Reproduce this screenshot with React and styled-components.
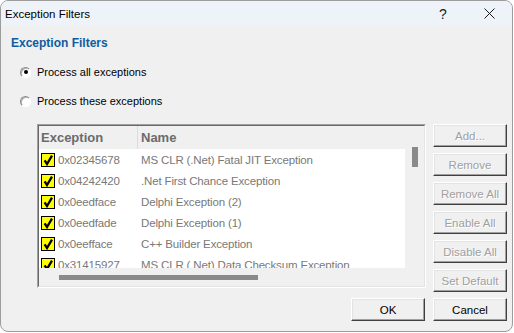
import React from 'react';
import styled, { createGlobalStyle } from 'styled-components';

const GlobalStyle = createGlobalStyle`
  html, body {
    margin: 0;
    padding: 0;
    background: #ffffff;
  }
  body {
    font-family: "Liberation Sans", Arial, sans-serif;
  }
  * {
    box-sizing: border-box;
  }
`;

const exceptions = [
  { code: '0x02345678', name: 'MS CLR (.Net) Fatal JIT Exception' },
  { code: '0x04242420', name: '.Net First Chance Exception' },
  { code: '0x0eedface', name: 'Delphi Exception (2)' },
  { code: '0x0eedfade', name: 'Delphi Exception (1)' },
  { code: '0x0eefface', name: 'C++ Builder Exception' },
  { code: '0x31415927', name: 'MS CLR (.Net) Data Checksum Exception' },
];

const sideButtons = ['Add...', 'Remove', 'Remove All', 'Enable All', 'Disable All', 'Set Default'];

const App = () => {
  return (
    <>
      <GlobalStyle />
      <Window>
        <TitleBar>
          <TitleText>Exception Filters</TitleText>
          <CaptionButton>?</CaptionButton>
          <CaptionButton>
            <svg width="11" height="11" viewBox="0 0 11 11">
              <path d="M0.5 0.5 L10.5 10.5 M10.5 0.5 L0.5 10.5" stroke="#1a1a1a" strokeWidth="1" fill="none" />
            </svg>
          </CaptionButton>
        </TitleBar>
        <Content>
          <Heading>Exception Filters</Heading>
          <RadioRow $top={14}>
            <Radio $checked />
            <RadioLabel>Process all exceptions</RadioLabel>
          </RadioRow>
          <RadioRow $top={13}>
            <Radio />
            <RadioLabel>Process these exceptions</RadioLabel>
          </RadioRow>
          <MainRow>
            <LeftColumn>
              <ListFrame>
                <ListInner>
                  <ListBody>
                    <HeaderRow>
                      <HeaderCell>Exception</HeaderCell>
                      <HeaderCell $divider>Name</HeaderCell>
                    </HeaderRow>
                    {exceptions.map((ex) => (
                      <Row key={ex.code}>
                        <CodeCell>
                          <CheckBox>
                            <svg width="12" height="12" viewBox="0 0 12 12">
                              <path d="M2.6 6.4 L5 10 L10 1.6" stroke="#000" strokeWidth="2.3" fill="none" />
                            </svg>
                          </CheckBox>
                          <CellText>{ex.code}</CellText>
                        </CodeCell>
                        <NameCell>{ex.name}</NameCell>
                      </Row>
                    ))}
                  </ListBody>
                  <VScroll>
                    <VThumb />
                  </VScroll>
                  <HScroll>
                    <HThumb />
                  </HScroll>
                </ListInner>
              </ListFrame>
              <OkRow>
                <DialogButton>OK</DialogButton>
              </OkRow>
            </LeftColumn>
            <ButtonColumn>
              {sideButtons.map((label) => (
                <DialogButton key={label} disabled $disabled>
                  {label}
                </DialogButton>
              ))}
              <DialogButton>Cancel</DialogButton>
            </ButtonColumn>
          </MainRow>
        </Content>
      </Window>
    </>
  );
};

const Window = styled.div`
  width: 513px;
  height: 332px;
  border: 1px solid #9c9c9c;
  border-radius: 8px;
  overflow: hidden;
  background: #f0f0f0;
  display: flex;
  flex-direction: column;
`;

const TitleBar = styled.div`
  height: 25px;
  flex: none;
  display: flex;
  align-items: center;
  padding-left: 4px;
  background: #eef3f9;
`;

const TitleText = styled.div`
  flex: 1;
  font-size: 11.5px;
  color: #000;
`;

const CaptionButton = styled.div`
  width: 46px;
  height: 25px;
  display: flex;
  align-items: center;
  justify-content: center;
  font-size: 14px;
  color: #1a1a1a;
`;

const Content = styled.div`
  flex: 1;
  display: flex;
  flex-direction: column;
  padding: 10px 0 0 10px;
`;

const Heading = styled.div`
  font-size: 12px;
  line-height: 14px;
  font-weight: bold;
  color: #0f5c9e;
`;

const RadioRow = styled.div`
  display: flex;
  align-items: center;
  gap: 6px;
  height: 16px;
  margin: ${(p) => p.$top}px 0 0 9px;
`;

const Radio = styled.span`
  width: 11px;
  height: 11px;
  border-radius: 50%;
  border: 1px solid;
  border-color: #8a8a8a #ffffff #ffffff #8a8a8a;
  box-shadow: inset 1px 1px 0 #b0b0b0;
  background: #ffffff;
  display: flex;
  align-items: center;
  justify-content: center;

  &::after {
    content: '';
    width: 4px;
    height: 4px;
    border-radius: 50%;
    background: ${(p) => (p.$checked ? '#000' : 'transparent')};
  }
`;

const RadioLabel = styled.span`
  font-size: 11px;
  color: #000;
`;

const MainRow = styled.div`
  display: flex;
  gap: 7px;
  margin: 15px 0 0 26px;
`;

const LeftColumn = styled.div`
  width: 389px;
  display: flex;
  flex-direction: column;
`;

const ListFrame = styled.div`
  height: 164px;
  border: 1px solid;
  border-color: #a0a0a0 #ffffff #ffffff #a0a0a0;
`;

const ListInner = styled.div`
  height: 100%;
  border: 1px solid;
  border-color: #696969 #e3e3e3 #e3e3e3 #696969;
  display: grid;
  grid-template-columns: 1fr 19px;
  grid-template-rows: 1fr 18px;
  overflow: hidden;
`;

const ListBody = styled.div`
  background: #ffffff;
  overflow: hidden;
`;

const HeaderRow = styled.div`
  display: grid;
  grid-template-columns: 98px 1fr;
  height: 23px;
  background: #f0f0f0;
`;

const HeaderCell = styled.div`
  display: flex;
  align-items: center;
  padding-left: ${(p) => (p.$divider ? '3px' : '2px')};
  border-left: ${(p) => (p.$divider ? '1px solid #dcdcdc' : 'none')};
  font-size: 13px;
  font-weight: bold;
  color: #6b6b6b;
`;

const Row = styled.div`
  display: grid;
  grid-template-columns: 98px 1fr;
  height: 21px;
  align-items: center;
`;

const CodeCell = styled.div`
  display: flex;
  align-items: center;
  padding-left: 2px;
`;

const CheckBox = styled.span`
  width: 14px;
  height: 14px;
  flex: none;
  border: 1px solid #000;
  background: #ffff00;
  display: flex;
  align-items: center;
  justify-content: center;
`;

const CellText = styled.span`
  margin-left: 3px;
  font-size: 11.5px;
  letter-spacing: -0.15px;
  color: #787878;
  white-space: nowrap;
`;

const NameCell = styled.div`
  padding-left: 4px;
  font-size: 11.5px;
  letter-spacing: -0.15px;
  color: #787878;
  white-space: nowrap;
`;

const VScroll = styled.div`
  grid-row: 1 / span 2;
  grid-column: 2;
  background: #f0f0f0;
  padding: 21px 0 0 7px;
`;

const VThumb = styled.div`
  width: 6px;
  height: 20px;
  background: #8a8a8a;
`;

const HScroll = styled.div`
  background: #f0f0f0;
  padding: 7px 0 0 20px;
`;

const HThumb = styled.div`
  width: 199px;
  height: 5px;
  background: #8a8a8a;
`;

const OkRow = styled.div`
  margin-top: auto;
  display: flex;
  justify-content: flex-end;
  padding-right: 1px;
`;

const ButtonColumn = styled.div`
  display: flex;
  flex-direction: column;
  gap: 6px;
`;

const DialogButton = styled.button`
  width: 74px;
  height: 23px;
  padding: 0;
  font-family: "Liberation Sans", Arial, sans-serif;
  font-size: 11.5px;
  background: #f0f0f0;
  border: 1px solid;
  border-color: #ffffff #404040 #404040 #ffffff;
  box-shadow: inset -1px -1px 0 #a0a0a0, inset 1px 1px 0 #e3e3e3;
  color: ${(p) => (p.$disabled ? '#a0a0a0' : '#000')};
  text-shadow: ${(p) => (p.$disabled ? '1px 1px 0 #ffffff' : 'none')};
`;

export default App;
